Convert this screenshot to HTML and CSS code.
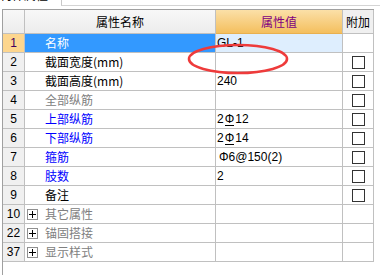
FILE: index.html
```html
<!DOCTYPE html>
<html lang="zh">
<head>
<meta charset="utf-8">
<title>构件属性</title>
<link rel="stylesheet" href="styles.css">
</head>
<body>
<div class="tabstrip"><span class="tablabel">构件属性</span><span class="tabline"></span></div>
<div class="panel">
  <div class="grid">
    <div class="hd num"></div><div class="hd name">属性名称</div><div class="hd val">属性值</div><div class="hd add">附加</div>

    <div class="c num sel-num">1</div><div class="c name sel-name">名称</div><div class="c val sel-val">GL-1</div><div class="c add"></div>

    <div class="c num">2</div><div class="c name">截面宽度(mm)</div><div class="c val"></div><div class="c add"><span class="chk"></span></div>

    <div class="c num">3</div><div class="c name">截面高度(mm)</div><div class="c val">240</div><div class="c add"><span class="chk"></span></div>

    <div class="c num">4</div><div class="c name gray">全部纵筋</div><div class="c val"></div><div class="c add"><span class="chk"></span></div>

    <div class="c num">5</div><div class="c name blue">上部纵筋</div><div class="c val">2<span class="bar">Φ</span>12</div><div class="c add"><span class="chk"></span></div>

    <div class="c num">6</div><div class="c name blue">下部纵筋</div><div class="c val">2<span class="bar">Φ</span>14</div><div class="c add"><span class="chk"></span></div>

    <div class="c num">7</div><div class="c name blue">箍筋</div><div class="c val"><span class="phi">Φ</span>6@150(2)</div><div class="c add"><span class="chk"></span></div>

    <div class="c num">8</div><div class="c name blue">肢数</div><div class="c val">2</div><div class="c add"><span class="chk"></span></div>

    <div class="c num">9</div><div class="c name">备注</div><div class="c val"></div><div class="c add"><span class="chk"></span></div>

    <div class="c num">10</div><div class="c name gray grp"><span class="exp"></span>其它属性</div><div class="c val"></div><div class="c add"></div>

    <div class="c num">22</div><div class="c name gray grp"><span class="exp"></span>锚固搭接</div><div class="c val"></div><div class="c add"></div>

    <div class="c num">37</div><div class="c name gray grp"><span class="exp"></span>显示样式</div><div class="c val"></div><div class="c add"></div>
  </div>
  <svg class="mark" width="110" height="40" viewBox="0 0 110 40"><ellipse cx="53" cy="19" rx="49" ry="14" fill="none" stroke="#ee3b3b" stroke-width="2.6"/></svg>
</div>
</body>
</html>
```

FILE: styles.css
```css
html, body {
  margin: 0;
  padding: 0;
  background: #ffffff;
}
body {
  width: 381px;
  height: 279px;
  overflow: hidden;
  font-family: "Noto Sans CJK SC", "Liberation Sans", sans-serif;
  font-size: 12px;
  color: #000;
}
.tabstrip {
  display: flex;
  height: 9px;
  overflow: hidden;
}
.tablabel {
  width: 61px;
  margin-top: -12px;
  line-height: 14px;
  font-size: 12px;
  color: #000;
  white-space: nowrap;
}
.tabline {
  width: 318px;
  height: 5px;
  border-left: 1px solid #c8c8c8;
  border-bottom: 1px solid #d4d4d4;
}
.panel {
  position: relative;
  margin-left: 2px;
  width: 371px;
  height: 265px;
  border-left: 1px solid #a0a0a0;
  border-top: 1px solid #a0a0a0;
}
.grid {
  display: grid;
  grid-template-columns: 22px 191px 127px 31px;
  grid-auto-rows: 19px;
  grid-template-rows: 24px;
}
.grid > div {
  box-sizing: border-box;
  border-right: 1px solid #c0c0c0;
  border-bottom: 1px solid #c0c0c0;
  white-space: nowrap;
  overflow: hidden;
}
.hd {
  background: linear-gradient(#f8f8f8, #ececec);
  display: flex;
  align-items: center;
  justify-content: center;
  font-size: 12px;
  line-height: 14px;
}
.hd.val {
  background: linear-gradient(#fbe0a8, #f4bf5e);
  color: #800080;
  border-bottom-color: #e8b050;
}
.hd.add {
  background: #f0f0f0;
}
.c {
  line-height: 18px;
}
.c.num {
  background: #f0f0f0;
  text-align: center;
  font-family: "Liberation Sans", sans-serif;
  font-size: 12px;
}
.c.name {
  padding-left: 20px;
}
.c.val {
  padding-left: 1px;
  font-family: "Liberation Sans", "Noto Sans CJK SC", sans-serif;
}
.c.add {
  display: flex;
  align-items: center;
  justify-content: center;
}
.sel-num {
  background: #fdd68e !important;
  color: #400060;
}
.sel-name {
  background: #3399ff;
  color: #ffffff;
}
.sel-val {
  background: #deeefe;
}
.gray {
  color: #808080;
}
.blue {
  color: #0000ff;
}
.chk {
  display: block;
  width: 11px;
  height: 11px;
  border: 1px solid #333333;
  background: #fff;
  margin-top: 1px;
}
.grp {
  padding-left: 2px !important;
  display: flex;
  align-items: center;
}
.exp {
  position: relative;
  display: inline-block;
  box-sizing: border-box;
  width: 11px;
  height: 11px;
  border: 1px solid #909090;
  background: #fff;
  margin-right: 7px;
}
.exp::before, .exp::after {
  content: "";
  position: absolute;
  background: #000;
}
.exp::before {
  left: 1px;
  top: 4px;
  width: 7px;
  height: 1px;
}
.exp::after {
  left: 4px;
  top: 1px;
  width: 1px;
  height: 7px;
}
.bar {
  display: inline-block;
  margin: 0 1px;
  border-bottom: 1px solid #000;
  line-height: 11px;
}
.phi {
  margin-left: 2px;
}
.mark {
  position: absolute;
  left: 182px;
  top: 30px;
}
```
